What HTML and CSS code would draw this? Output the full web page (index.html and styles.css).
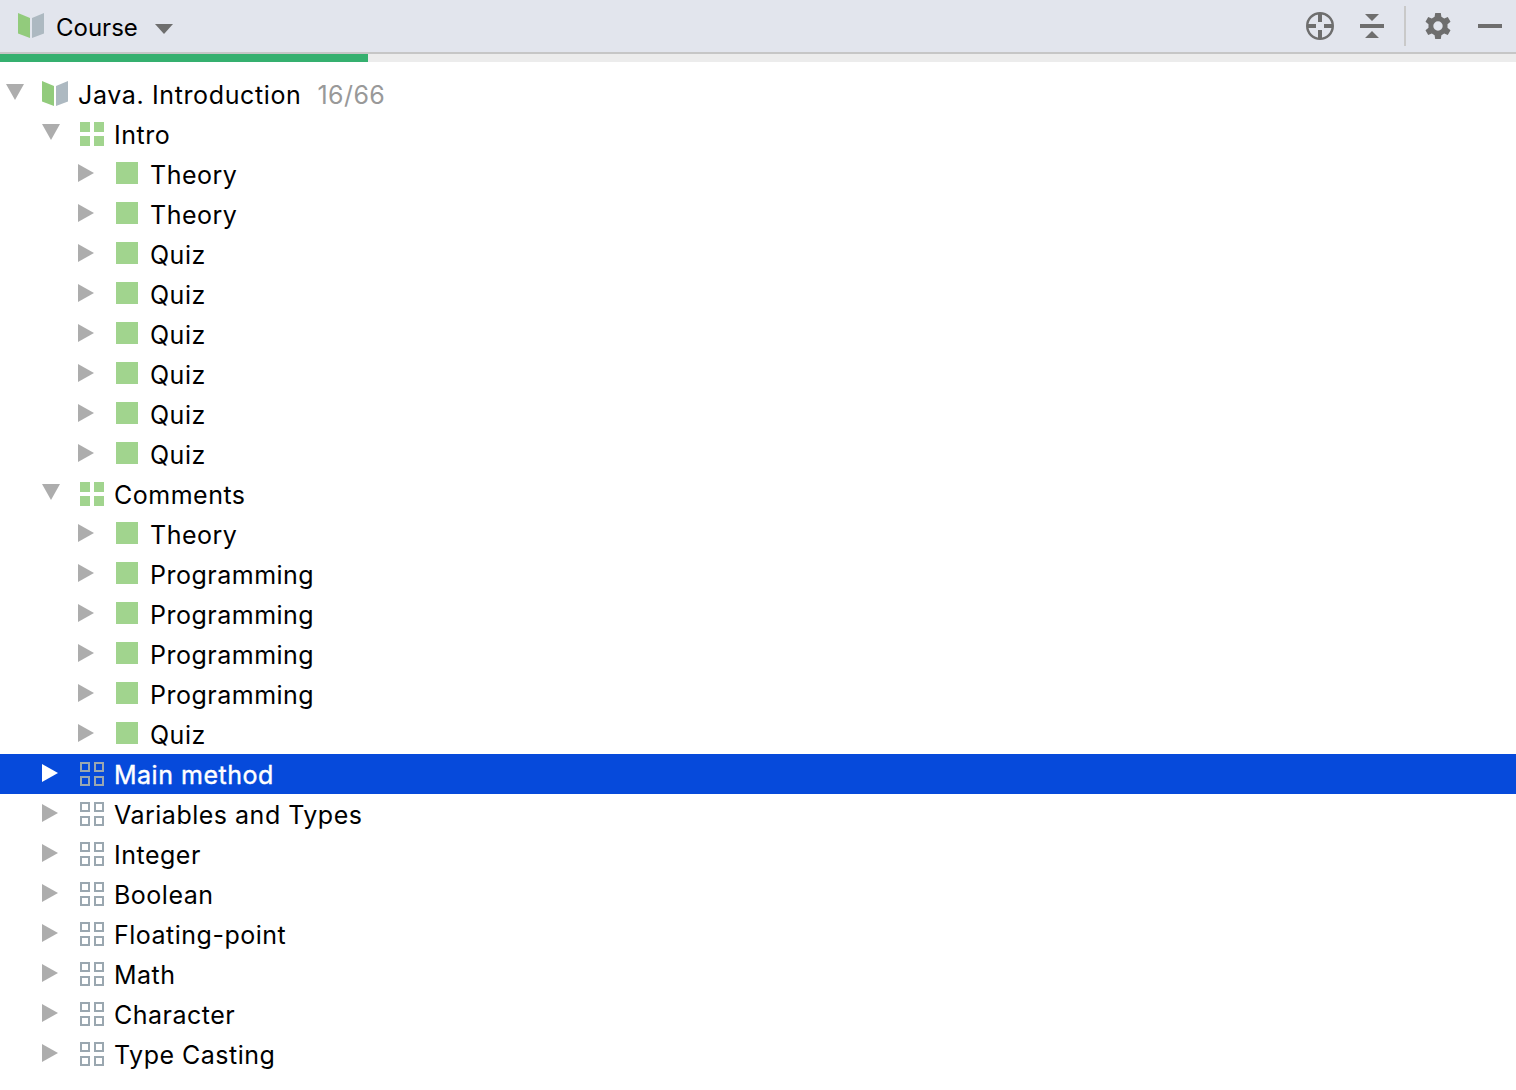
FILE: index.html
```html
<!DOCTYPE html>
<html lang="en">
<head>
<meta charset="utf-8">
<title>Course</title>
<link rel="stylesheet" href="styles.css">
</head>
<body>
<svg class="defs" width="0" height="0">
  <symbol id="open" viewBox="0 0 36 40"><path fill="currentColor" d="M0 10H18L9 26Z"/></symbol>
  <symbol id="closed" viewBox="0 0 36 40"><path fill="currentColor" d="M0 10L16 19L0 28Z"/></symbol>
  <symbol id="book" viewBox="0 0 36 40"><path fill="#92cb7c" d="M0 7L12 12V32L0 27.5Z"/><path fill="#adb9c1" d="M14 12L26 7V27.5L14 32Z"/></symbol>
  <symbol id="done" viewBox="0 0 36 40"><path fill="#a1d48e" d="M2 8h10v10H2zM16 8h10v10H16zM2 22h10v10H2zM16 22h10v10H16z"/></symbol>
  <symbol id="todo" viewBox="0 0 36 40"><path fill="none" stroke="#9aa7b0" stroke-width="2" d="M3 9h8v8H3zM17 9h8v8H17zM3 23h8v8H3zM17 23h8v8H17z"/></symbol>
  <symbol id="task" viewBox="0 0 36 40"><path fill="#a1d48e" d="M2 8h22v22H2z"/></symbol>
</svg>
<header class="toolbar">
  <svg class="slot book" ><use href="#book"/></svg>
  <span class="title">Course</span>
  <svg class="caret" width="18" height="10"><path fill="#6e6e6e" d="M0 0H18L9 10Z"/></svg>
  <div class="actions">
    <svg width="28" height="28"><circle cx="14" cy="14" r="12.8" fill="none" stroke="#6e6e6e" stroke-width="2.4"/><path fill="#6e6e6e" d="M12 2h4v8h-4zM12 18h4v8h-4zM2 12h8v4H2zM18 12h8v4h-8z"/></svg>
    <svg class="collapse" width="24" height="24"><path fill="#6e6e6e" d="M5 0h14l-7 7zM0 10h24v4H0zM5 24h14l-7-7z"/></svg>
    <span class="separator"></span>
    <svg class="gear" width="26" height="26" viewBox="-13 -13 26 26"><path fill="#6e6e6e" fill-rule="evenodd" d="M-2.8-13H2.8L3.4-9.2L6.2-7.6L9.8-9L12.5-4.2L9.5-1.7V1.7L12.5 4.2L9.8 9L6.2 7.6L3.4 9.2L2.8 13H-2.8L-3.4 9.2L-6.2 7.6L-9.8 9L-12.5 4.2L-9.5 1.7V-1.7L-12.5-4.2L-9.8-9L-6.2-7.6L-3.4-9.2ZM0-4.7A4.7 4.7 0 1 0 0 4.7A4.7 4.7 0 1 0 0-4.7Z"/></svg>
    <span class="minimize"></span>
  </div>
</header>
<div class="progress"><div class="progress-value"></div></div>
<main class="tree">
  <div class="row"><svg class="slot"><use href="#open"/></svg><svg class="slot"><use href="#book"/></svg><span class="label root">Java. Introduction</span><span class="count">16/66</span></div>
  <div class="row section"><svg class="slot"><use href="#open"/></svg><svg class="slot"><use href="#done"/></svg><span class="label">Intro</span></div>
  <div class="row lesson"><svg class="slot"><use href="#closed"/></svg><svg class="slot"><use href="#task"/></svg><span class="label">Theory</span></div>
  <div class="row lesson"><svg class="slot"><use href="#closed"/></svg><svg class="slot"><use href="#task"/></svg><span class="label">Theory</span></div>
  <div class="row lesson"><svg class="slot"><use href="#closed"/></svg><svg class="slot"><use href="#task"/></svg><span class="label">Quiz</span></div>
  <div class="row lesson"><svg class="slot"><use href="#closed"/></svg><svg class="slot"><use href="#task"/></svg><span class="label">Quiz</span></div>
  <div class="row lesson"><svg class="slot"><use href="#closed"/></svg><svg class="slot"><use href="#task"/></svg><span class="label">Quiz</span></div>
  <div class="row lesson"><svg class="slot"><use href="#closed"/></svg><svg class="slot"><use href="#task"/></svg><span class="label">Quiz</span></div>
  <div class="row lesson"><svg class="slot"><use href="#closed"/></svg><svg class="slot"><use href="#task"/></svg><span class="label">Quiz</span></div>
  <div class="row lesson"><svg class="slot"><use href="#closed"/></svg><svg class="slot"><use href="#task"/></svg><span class="label">Quiz</span></div>
  <div class="row section"><svg class="slot"><use href="#open"/></svg><svg class="slot"><use href="#done"/></svg><span class="label">Comments</span></div>
  <div class="row lesson"><svg class="slot"><use href="#closed"/></svg><svg class="slot"><use href="#task"/></svg><span class="label">Theory</span></div>
  <div class="row lesson"><svg class="slot"><use href="#closed"/></svg><svg class="slot"><use href="#task"/></svg><span class="label">Programming</span></div>
  <div class="row lesson"><svg class="slot"><use href="#closed"/></svg><svg class="slot"><use href="#task"/></svg><span class="label">Programming</span></div>
  <div class="row lesson"><svg class="slot"><use href="#closed"/></svg><svg class="slot"><use href="#task"/></svg><span class="label">Programming</span></div>
  <div class="row lesson"><svg class="slot"><use href="#closed"/></svg><svg class="slot"><use href="#task"/></svg><span class="label">Programming</span></div>
  <div class="row lesson"><svg class="slot"><use href="#closed"/></svg><svg class="slot"><use href="#task"/></svg><span class="label">Quiz</span></div>
  <div class="row section selected"><svg class="slot"><use href="#closed"/></svg><svg class="slot"><use href="#todo"/></svg><span class="label">Main method</span></div>
  <div class="row section"><svg class="slot"><use href="#closed"/></svg><svg class="slot"><use href="#todo"/></svg><span class="label">Variables and Types</span></div>
  <div class="row section"><svg class="slot"><use href="#closed"/></svg><svg class="slot"><use href="#todo"/></svg><span class="label">Integer</span></div>
  <div class="row section"><svg class="slot"><use href="#closed"/></svg><svg class="slot"><use href="#todo"/></svg><span class="label">Boolean</span></div>
  <div class="row section"><svg class="slot"><use href="#closed"/></svg><svg class="slot"><use href="#todo"/></svg><span class="label">Floating-point</span></div>
  <div class="row section"><svg class="slot"><use href="#closed"/></svg><svg class="slot"><use href="#todo"/></svg><span class="label">Math</span></div>
  <div class="row section"><svg class="slot"><use href="#closed"/></svg><svg class="slot"><use href="#todo"/></svg><span class="label">Character</span></div>
  <div class="row section"><svg class="slot"><use href="#closed"/></svg><svg class="slot"><use href="#todo"/></svg><span class="label">Type Casting</span></div>
</main>
</body>
</html>
```
FILE: styles.css
```css
* { box-sizing: border-box; }
body {
  margin: 0;
  height: 1090px;
  overflow: hidden;
  background: #fff;
  color: #000;
  font: 400 25px/40px Inter, "Liberation Sans", sans-serif;
  letter-spacing: 0.5px;
}
svg { display: block; flex: none; }
.defs { display: none; }
.slot { width: 36px; height: 40px; }
.toolbar {
  display: flex;
  align-items: center;
  height: 54px;
  padding: 0 14px 0 18px;
  background: #e2e5ed;
  border-bottom: 2px solid #c6c6c6;
}
.toolbar .book { margin-top: -1px; }
.title { width: 101px; padding: 3px 0 0 2px; font-size: 24px; letter-spacing: 0; }
.caret { margin-top: 6px; }
.actions { display: flex; align-items: center; margin-left: auto; }
.collapse { margin-left: 26px; }
.separator { width: 2px; height: 40px; margin: 0 19px 0 20px; background: #c9c9c9; }
.minimize { width: 24px; height: 4px; margin-left: 27px; background: #6e6e6e; }
.progress { height: 8px; background: #ececec; }
.progress-value { width: 368px; height: 8px; background: #35b06f; }
.tree { padding-top: 12px; }
.row {
  display: flex;
  height: 40px;
  padding-left: 6px;
  color: #adadad;
}
.section { padding-left: 42px; }
.lesson { padding-left: 78px; }
.label { padding-top: 1px; color: #000; white-space: nowrap; }
.root { letter-spacing: 0.63px; }
.count { padding: 1px 0 0 16px; color: #999; letter-spacing: 0.4px; }
.selected { background: #064adb; color: #fff; }
.selected .label { color: #fff; -webkit-text-stroke: 0.4px #fff; }
```
